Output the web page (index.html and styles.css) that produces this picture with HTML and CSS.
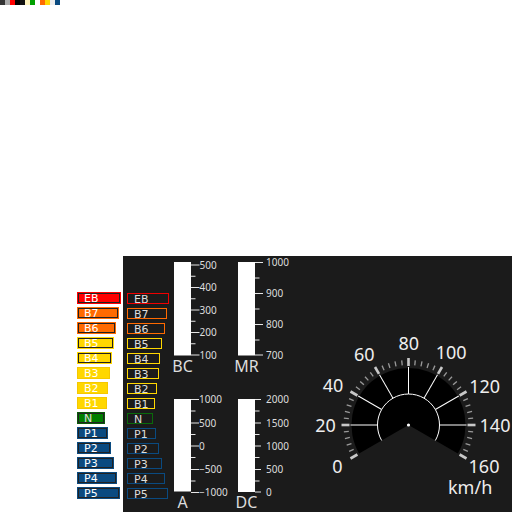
FILE: index.html
```
<!DOCTYPE html>
<html>
<head>
<meta charset="utf-8">
<link rel="stylesheet" href="styles.css">
</head>
<body>
<div class="strip">
  <span class="c1"></span><span class="c2"></span><span class="c3"></span><span class="c4"></span><span class="c5"></span><span class="c6"></span><span class="c7"></span><span class="c8"></span><span class="c9"></span><span class="c10"></span><span class="c11"></span><span class="c12"></span>
</div>
<div class="main">
  <div class="notches out">
    <div class="notch red w44">EB</div>
    <div class="notch orange w42">B7</div>
    <div class="notch orange w39">B6</div>
    <div class="notch yellow w37">B5</div>
    <div class="notch yellow w35">B4</div>
    <div class="notch yellow plain w33">B3</div>
    <div class="notch yellow plain w31">B2</div>
    <div class="notch yellow plain w30">B1</div>
    <div class="notch green w28">N</div>
    <div class="notch blue w31">P1</div>
    <div class="notch blue w34">P2</div>
    <div class="notch blue w37">P3</div>
    <div class="notch blue w40">P4</div>
    <div class="notch blue w43">P5</div>
  </div>
  <div class="panel">
    <div class="notches in">
      <div class="dnotch red w42">EB</div>
      <div class="dnotch orange w40">B7</div>
      <div class="dnotch orange w38">B6</div>
      <div class="dnotch yellow w35">B5</div>
      <div class="dnotch yellow w33">B4</div>
      <div class="dnotch yellow w32">B3</div>
      <div class="dnotch yellow w30">B2</div>
      <div class="dnotch yellow w28">B1</div>
      <div class="dnotch green w26">N</div>
      <div class="dnotch blue w29">P1</div>
      <div class="dnotch blue w32">P2</div>
      <div class="dnotch blue w35">P3</div>
      <div class="dnotch blue w38">P4</div>
      <div class="dnotch blue w41">P5</div>
    </div>
    <div class="gauges">
      <svg class="gauge" width="64" height="120" viewBox="0 0 64 120">
        <rect class="bar" x="0" y="0" width="17" height="93.5"/>
        <g class="tk">
          <line x1="17" y1="3" x2="25.5" y2="3"/>
          <line x1="17" y1="25.5" x2="25.5" y2="25.5"/>
          <line x1="17" y1="48" x2="25.5" y2="48"/>
          <line x1="17" y1="70.5" x2="25.5" y2="70.5"/>
          <line x1="17" y1="93" x2="25.5" y2="93"/>
          <line x1="17" y1="14.25" x2="21.5" y2="14.25"/>
          <line x1="17" y1="36.75" x2="21.5" y2="36.75"/>
          <line x1="17" y1="59.25" x2="21.5" y2="59.25"/>
          <line x1="17" y1="81.75" x2="21.5" y2="81.75"/>
        </g>
        <text class="tl" x="25.5" y="6.6">500</text>
        <text class="tl" x="25.5" y="29.1">400</text>
        <text class="tl" x="25.5" y="51.6">300</text>
        <text class="tl" x="25.5" y="74.1">200</text>
        <text class="tl" x="25.5" y="96.6">100</text>
        <text class="gt" x="8.5" y="110">BC</text>
      </svg>
      <svg class="gauge" width="64" height="120" viewBox="0 0 64 120">
        <rect class="bar" x="0" y="0" width="17" height="93.5"/>
        <g class="tk">
          <line x1="17" y1="0.5" x2="25" y2="0.5"/>
          <line x1="17" y1="31.5" x2="25" y2="31.5"/>
          <line x1="17" y1="62.5" x2="25" y2="62.5"/>
          <line x1="17" y1="93" x2="25" y2="93"/>
          <line x1="17" y1="16" x2="21.5" y2="16"/>
          <line x1="17" y1="47" x2="21.5" y2="47"/>
          <line x1="17" y1="78" x2="21.5" y2="78"/>
        </g>
        <text class="tl" x="28" y="4">1000</text>
        <text class="tl" x="28" y="35">900</text>
        <text class="tl" x="28" y="66">800</text>
        <text class="tl" x="28" y="96.6">700</text>
        <text class="gt" x="8.5" y="110">MR</text>
      </svg>
      <svg class="gauge" width="64" height="120" viewBox="0 0 64 120">
        <rect class="bar" x="0" y="0" width="17" height="92.5"/>
        <g class="tk">
          <line x1="17" y1="0.5" x2="25" y2="0.5"/>
          <line x1="17" y1="24" x2="25" y2="24"/>
          <line x1="17" y1="47" x2="25" y2="47"/>
          <line x1="17" y1="70.5" x2="25" y2="70.5"/>
          <line x1="17" y1="93.5" x2="25" y2="93.5"/>
          <line x1="17" y1="12" x2="21.5" y2="12"/>
          <line x1="17" y1="35.5" x2="21.5" y2="35.5"/>
          <line x1="17" y1="58.5" x2="21.5" y2="58.5"/>
          <line x1="17" y1="82" x2="21.5" y2="82"/>
        </g>
        <text class="tl" x="25" y="4">1000</text>
        <text class="tl" x="25" y="27.5">500</text>
        <text class="tl" x="25" y="50.5">0</text>
        <text class="tl" x="25" y="74">−500</text>
        <text class="tl" x="25" y="97">−1000</text>
        <text class="gt" x="8.5" y="109">A</text>
      </svg>
      <svg class="gauge" width="64" height="120" viewBox="0 0 64 120">
        <rect class="bar" x="0" y="0" width="17" height="93"/>
        <g class="tk">
          <line x1="17" y1="0.5" x2="23" y2="0.5"/>
          <line x1="17" y1="24" x2="23" y2="24"/>
          <line x1="17" y1="47" x2="23" y2="47"/>
          <line x1="17" y1="70.5" x2="23" y2="70.5"/>
          <line x1="17" y1="93" x2="23" y2="93"/>
          <line x1="17" y1="12" x2="21.5" y2="12"/>
          <line x1="17" y1="35.5" x2="21.5" y2="35.5"/>
          <line x1="17" y1="58.5" x2="21.5" y2="58.5"/>
          <line x1="17" y1="82" x2="21.5" y2="82"/>
        </g>
        <text class="tl" x="28" y="4">2000</text>
        <text class="tl" x="28" y="27.5">1500</text>
        <text class="tl" x="28" y="50.5">1000</text>
        <text class="tl" x="28" y="74">500</text>
        <text class="tl" x="28" y="96.6">0</text>
        <text class="gt" x="8.5" y="109">DC</text>
      </svg>
    </div>
    <svg class="speedo" width="210" height="256" viewBox="0 0 210 256">
      <g transform="translate(106.5 169)">
        <path class="dial" d="M0,0 L-49.36,28.5 A57,57 0 1 1 49.36,28.5 Z"/>
        <path class="hub" d="M-26.85,15.5 A31,31 0 1 1 26.85,15.5"/>
        <g class="spoke">
          <line y1="-31" y2="-58" transform="rotate(-90)"/>
          <line y1="-31" y2="-58" transform="rotate(-60)"/>
          <line y1="-31" y2="-58" transform="rotate(-30)"/>
          <line y1="-31" y2="-58" transform="rotate(0)"/>
          <line y1="-31" y2="-58" transform="rotate(30)"/>
          <line y1="-31" y2="-58" transform="rotate(60)"/>
          <line y1="-31" y2="-58" transform="rotate(90)"/>
        </g>
        <g class="minor">
          <line y1="-60" y2="-65" transform="rotate(-114)"/>
          <line y1="-60" y2="-65" transform="rotate(-108)"/>
          <line y1="-60" y2="-65" transform="rotate(-102)"/>
          <line y1="-60" y2="-65" transform="rotate(-96)"/>
          <line y1="-60" y2="-65" transform="rotate(-84)"/>
          <line y1="-60" y2="-65" transform="rotate(-78)"/>
          <line y1="-60" y2="-65" transform="rotate(-72)"/>
          <line y1="-60" y2="-65" transform="rotate(-66)"/>
          <line y1="-60" y2="-65" transform="rotate(-54)"/>
          <line y1="-60" y2="-65" transform="rotate(-48)"/>
          <line y1="-60" y2="-65" transform="rotate(-42)"/>
          <line y1="-60" y2="-65" transform="rotate(-36)"/>
          <line y1="-60" y2="-65" transform="rotate(-24)"/>
          <line y1="-60" y2="-65" transform="rotate(-18)"/>
          <line y1="-60" y2="-65" transform="rotate(-12)"/>
          <line y1="-60" y2="-65" transform="rotate(-6)"/>
          <line y1="-60" y2="-65" transform="rotate(6)"/>
          <line y1="-60" y2="-65" transform="rotate(12)"/>
          <line y1="-60" y2="-65" transform="rotate(18)"/>
          <line y1="-60" y2="-65" transform="rotate(24)"/>
          <line y1="-60" y2="-65" transform="rotate(36)"/>
          <line y1="-60" y2="-65" transform="rotate(42)"/>
          <line y1="-60" y2="-65" transform="rotate(48)"/>
          <line y1="-60" y2="-65" transform="rotate(54)"/>
          <line y1="-60" y2="-65" transform="rotate(66)"/>
          <line y1="-60" y2="-65" transform="rotate(72)"/>
          <line y1="-60" y2="-65" transform="rotate(78)"/>
          <line y1="-60" y2="-65" transform="rotate(84)"/>
          <line y1="-60" y2="-65" transform="rotate(96)"/>
          <line y1="-60" y2="-65" transform="rotate(102)"/>
          <line y1="-60" y2="-65" transform="rotate(108)"/>
          <line y1="-60" y2="-65" transform="rotate(114)"/>
        </g>
        <g class="major">
          <line y1="-59" y2="-67" transform="rotate(-120)"/>
          <line y1="-59" y2="-67" transform="rotate(-90)"/>
          <line y1="-59" y2="-67" transform="rotate(-60)"/>
          <line y1="-59" y2="-67" transform="rotate(-30)"/>
          <line y1="-59" y2="-67" transform="rotate(0)"/>
          <line y1="-59" y2="-67" transform="rotate(30)"/>
          <line y1="-59" y2="-67" transform="rotate(60)"/>
          <line y1="-59" y2="-67" transform="rotate(90)"/>
          <line y1="-59" y2="-67" transform="rotate(120)"/>
        </g>
        <circle class="pivot" r="1.6"/>
        <text class="sl" x="-71" y="48.2">0</text>
        <text class="sl" x="-83" y="6.5">20</text>
        <text class="sl" x="-75.5" y="-33.5">40</text>
        <text class="sl" x="-44.2" y="-64.2">60</text>
        <text class="sl" x="0.2" y="-75.2">80</text>
        <text class="sl" x="42.7" y="-65.8">100</text>
        <text class="sl" x="76.2" y="-32.5">120</text>
        <text class="sl" x="86.5" y="6.5">140</text>
        <text class="sl" x="75.5" y="48.2">160</text>
        <text class="unit" x="39.5" y="69">km/h</text>
      </g>
    </svg>
  </div>
</div>
</body>
</html>
```
FILE: styles.css
```
* { box-sizing: border-box; }
html, body { margin: 0; padding: 0; background: #fff; overflow: hidden; }
body {
  width: 512px;
  height: 512px;
  font-family: "Noto Sans", "DejaVu Sans", sans-serif;
}

.strip { display: flex; height: 5px; }
.strip span { width: 5px; height: 5px; }
.c1 { background: #333; }
.c2 { background: #aaa; }
.c3 { background: #f00; }
.c4 { background: #000; }
.c5 { background: #111; }
.c6 { background: #fff4c0; }
.c7 { background: #00a000; }
.c8 { background: #fff; }
.c9 { background: #ff6a00; }
.c10 { background: #ffd700; }
.c11 { background: #eee; }
.c12 { background: #0a4a80; }

.main { display: flex; margin-top: 251px; height: 256px; }

.notches { display: flex; flex-direction: column; }
.notches.out { width: 123px; padding: 36px 0 0 77px; gap: 3px; }
.notches.in { width: 47px; padding: 37px 0 0 4px; gap: 4px; }

.notch {
  height: 12px;
  border: 1px solid;
  box-shadow: inset 0 0 0 1px #222;
  color: #fff;
  font-family: "DejaVu Sans", sans-serif;
  font-size: 11px;
  line-height: 12px;
  padding-left: 6px;
  white-space: nowrap;
}
.notch.red { background: #f00; border-color: #f00; }
.notch.orange { background: #ff6a00; border-color: #ff6a00; }
.notch.yellow { background: #ffd700; border-color: #ffd700; }
.notch.yellow.plain { box-shadow: none; border-color: #f5c800; }
.notch.green { background: #007f00; border-color: #0a5a0a; color: #e0e0e0; }
.notch.blue { background: #0a4a80; border-color: #0a4a80; }

.dnotch {
  height: 11px;
  border: 1px solid;
  color: #ddd;
  font-family: "DejaVu Sans", sans-serif;
  font-size: 11px;
  line-height: 11px;
  padding-left: 6px;
  white-space: nowrap;
}
.dnotch.red { border-color: #e00; }
.dnotch.orange { border-color: #ff6a00; }
.dnotch.yellow { border-color: #ffd700; }
.dnotch.green { border-color: #0a6a0a; }
.dnotch.blue { border-color: #0a4a80; }

.w26 { width: 26px; } .w28 { width: 28px; } .w29 { width: 29px; }
.w30 { width: 30px; } .w31 { width: 31px; } .w32 { width: 32px; }
.w33 { width: 33px; } .w34 { width: 34px; } .w35 { width: 35px; }
.w37 { width: 37px; } .w38 { width: 38px; } .w39 { width: 39px; }
.w40 { width: 40px; } .w41 { width: 41px; } .w42 { width: 42px; }
.w43 { width: 43px; } .w44 { width: 44px; }

.panel {
  flex: 1;
  display: flex;
  background: #1b1b1b;
  overflow: hidden;
}

.gauges {
  display: grid;
  grid-template-columns: 64px 64px;
  grid-template-rows: 120px 120px;
  row-gap: 17px;
  width: 128px;
  margin: 6px 0 0 4px;
}
.gauge { overflow: visible; display: block; }
.gauge .bar { fill: #fff; }
.gauge .tk line { stroke: #e6e6e6; stroke-width: 1; }
.gauge .tl { font-family: "Noto Sans", sans-serif; font-size: 10px; fill: #ddd; }
.gauge .gt { font-family: "Noto Sans", sans-serif; font-size: 16px; fill: #ddd; text-anchor: middle; }

.speedo { display: block; flex: none; }
.speedo .dial { fill: #000; }
.speedo .hub { fill: none; stroke: #fff; stroke-width: 1; }
.speedo .spoke line { stroke: #fff; stroke-width: 1; }
.speedo .minor line { stroke: #9a9a9a; stroke-width: 1.3; }
.speedo .major line { stroke: #c8c8c8; stroke-width: 2.6; }
.speedo .pivot { fill: #fff; }
.speedo .sl { font-family: "Noto Sans", sans-serif; font-size: 18px; fill: #eee; text-anchor: middle; }
.speedo .unit { font-family: "Noto Sans", sans-serif; font-size: 18px; fill: #eee; }
```
